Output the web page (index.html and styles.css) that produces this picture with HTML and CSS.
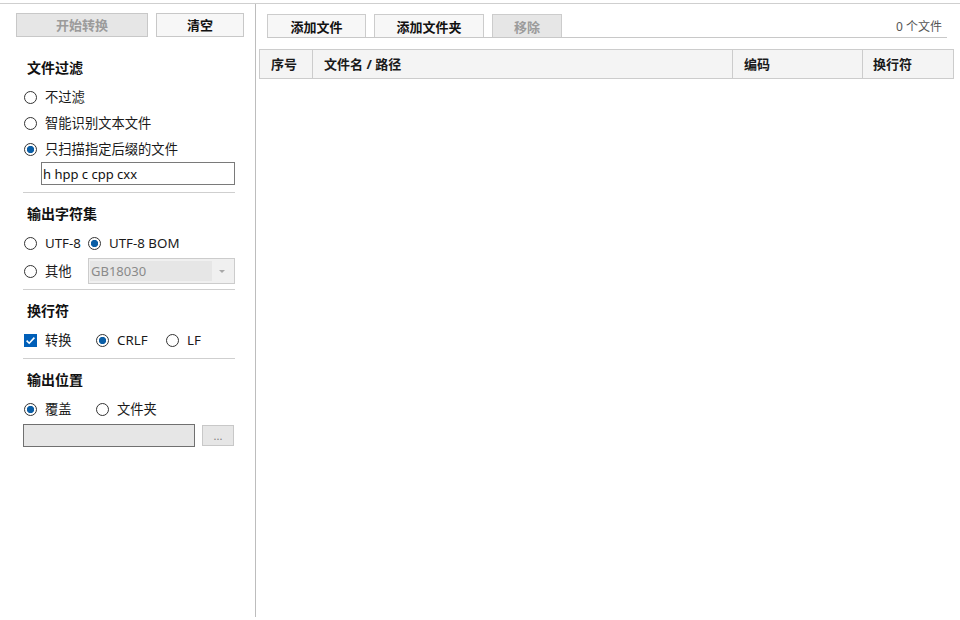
FILE: index.html
```html
<!DOCTYPE html>
<html lang="zh-CN">
<head>
  <meta charset="UTF-8">
  <meta name="viewport" content="width=device-width, initial-scale=1.0">
  <title>编码转换</title>
  <link rel="stylesheet" href="styles.css">
</head>
<body>
  <div class="app">
    <aside class="side">
      <div class="actions">
        <button class="btn btn-start" disabled>开始转换</button>
        <button class="btn btn-clear">清空</button>
      </div>

      <div class="side-body">
        <!-- 文件过滤 -->
        <h2 class="group-title first">文件过滤</h2>
        <div class="row"><label class="opt"><span class="radio"></span>不过滤</label></div>
        <div class="row"><label class="opt"><span class="radio"></span>智能识别文本文件</label></div>
        <div class="row"><label class="opt"><span class="radio checked"></span>只扫描指定后缀的文件</label></div>
        <input class="ext-input" type="text" value="h hpp c cpp cxx">

        <hr class="sep">

        <!-- 输出字符集 -->
        <h2 class="group-title">输出字符集</h2>
        <div class="row">
          <label class="opt w64"><span class="radio"></span>UTF-8</label>
          <label class="opt"><span class="radio checked"></span>UTF-8 BOM</label>
        </div>
        <div class="row row-combo">
          <label class="opt w65"><span class="radio"></span>其他</label>
          <div class="combo">
            <span class="combo-text">GB18030</span>
            <span class="combo-arrow"></span>
          </div>
        </div>

        <hr class="sep">

        <!-- 换行符 -->
        <h2 class="group-title">换行符</h2>
        <div class="row">
          <label class="opt w72">
            <svg class="check" width="13" height="13" viewBox="0 0 13 13">
              <rect width="13" height="13" fill="#005fb8"/>
              <path d="M2.6 6.6 L5.2 9.2 L10.4 3.6" fill="none" stroke="#fff" stroke-width="1.6"/>
            </svg>转换
          </label>
          <label class="opt w70"><span class="radio checked"></span>CRLF</label>
          <label class="opt"><span class="radio"></span>LF</label>
        </div>

        <hr class="sep">

        <!-- 输出位置 -->
        <h2 class="group-title">输出位置</h2>
        <div class="row">
          <label class="opt w72"><span class="radio checked"></span>覆盖</label>
          <label class="opt"><span class="radio"></span>文件夹</label>
        </div>
        <div class="path-row">
          <input class="path-input" type="text" disabled>
          <button class="btn btn-browse" disabled>...</button>
        </div>
      </div>
    </aside>

    <main class="main">
      <div class="toolbar">
        <button class="tab-btn w99">添加文件</button>
        <button class="tab-btn w110">添加文件夹</button>
        <button class="tab-btn w70 disabled" disabled>移除</button>
        <span class="count">0 个文件</span>
      </div>

      <div class="file-table">
        <div class="th">序号</div>
        <div class="th">文件名 / 路径</div>
        <div class="th">编码</div>
        <div class="th">换行符</div>
      </div>
    </main>
  </div>
</body>
</html>
```

FILE: styles.css
```css
* {
  box-sizing: border-box;
}

body {
  margin: 0;
  padding-top: 3px;
  background-color: #fff;
  color: #1a1a1a;
  font-family: "Noto Sans", "Noto Sans CJK SC", sans-serif;
  font-size: 13px;
}

.app {
  display: flex;
  height: 614px;
  border-top: 1px solid #cfcfcf;
}

/* left settings column */
.side {
  width: 256px;
  flex-shrink: 0;
  border-right: 1px solid #bdbdbd;
  padding-top: 9px;
}

.actions {
  display: flex;
  gap: 8px;
  padding-left: 16px;
}

.btn {
  height: 24px;
  padding: 0;
  border: 1px solid #c8c8c8;
  background-color: #f7f7f7;
  color: #111;
  font-family: inherit;
  font-size: 13px;
  font-weight: 700;
  line-height: 22px;
}

.btn-start {
  width: 132px;
  background-color: #e6e6e6;
  color: #9b9b9b;
}

.btn-clear {
  width: 88px;
}

.side-body {
  padding: 0 20px 0 23px;
}

.group-title {
  margin: 11px 0 6px 0;
  padding-left: 4px;
  font-size: 14px;
  font-weight: 700;
  line-height: 20px;
  color: #111;
}

.group-title.first {
  margin-top: 21px;
}

.row {
  display: flex;
  align-items: center;
  height: 26px;
}

.row-combo {
  margin-top: 2px;
}

.opt {
  display: inline-flex;
  align-items: center;
  gap: 8px;
  height: 26px;
  padding-left: 1px;
  white-space: nowrap;
  line-height: 26px;
  font-size: 13.3px;
}

.w64 { width: 64px; }
.w65 { width: 65px; }
.w70 { width: 70px; }
.w72 { width: 72px; }
.w99 { width: 99px; }
.w110 { width: 110px; }

.radio {
  width: 13px;
  height: 13px;
  flex-shrink: 0;
  border: 1px solid #333;
  border-radius: 50%;
  background-color: #fff;
}

.radio.checked {
  background: radial-gradient(circle, #0a5ea6 0, #0a5ea6 3.4px, #fff 3.9px);
}

.check {
  display: block;
  flex-shrink: 0;
}

.ext-input {
  display: block;
  width: 194px;
  height: 23px;
  margin: 0 0 0 18px;
  padding: 0 1px;
  border: 1px solid #7a7a7a;
  font-family: inherit;
  font-size: 13px;
  color: #111;
  outline: none;
}

.sep {
  height: 1px;
  margin: 7px 0 0 0;
  border: none;
  background-color: #cfcfcf;
}

.row-combo + .sep,
.row + .sep {
  margin-top: 5px;
}

.combo {
  display: flex;
  align-items: center;
  width: 147px;
  height: 26px;
  padding: 2px 2px 2px 1px;
  border: 1px solid #cccccc;
  background-color: #f0f0f0;
}

.combo-text {
  flex: 1;
  height: 100%;
  padding-left: 1px;
  background-color: #e6e6e6;
  color: #8a8a8a;
  line-height: 20px;
}

.combo-arrow {
  width: 20px;
  height: 100%;
  position: relative;
}

.combo-arrow::after {
  content: "";
  position: absolute;
  left: 7px;
  top: 9px;
  border-left: 3px solid transparent;
  border-right: 3px solid transparent;
  border-top: 3px solid #a8a8a8;
}

.path-row {
  display: flex;
  align-items: center;
  gap: 7px;
  margin-top: 2px;
}

.path-input {
  width: 172px;
  height: 23px;
  border: 1px solid #707070;
  background-color: #e6e6e6;
  outline: none;
}

.btn-browse {
  width: 32px;
  height: 21px;
  border-color: #c8c8c8;
  background-color: #e6e6e6;
  color: #7f7f7f;
  font-size: 11px;
  font-weight: 400;
  line-height: 19px;
}

/* right file list */
.main {
  flex: 1;
  padding: 10px 6px 0 3px;
}

.toolbar {
  display: flex;
  align-items: flex-end;
  gap: 8px;
  height: 24px;
  margin: 0 7px 0 8px;
  border-bottom: 1px solid #c8c8c8;
}

.tab-btn {
  height: 23px;
  padding: 0;
  border: 1px solid #cccccc;
  border-bottom: none;
  background-color: #f7f7f7;
  color: #111;
  font-family: inherit;
  font-size: 13px;
  font-weight: 700;
  line-height: 24px;
}

.tab-btn.disabled {
  background-color: #e6e6e6;
  color: #9b9b9b;
}

.count {
  margin-left: auto;
  align-self: center;
  padding-right: 5px;
  color: #555;
  font-size: 12px;
}

.file-table {
  display: grid;
  grid-template-columns: 53px 420px 130px 1fr;
  margin-top: 11px;
  border: 1px solid #cccccc;
  background-color: #f4f4f4;
}

.th {
  height: 28px;
  padding-left: 11px;
  border-right: 1px solid #cccccc;
  font-weight: 700;
  line-height: 28px;
  color: #1a1a1a;
}

.th:last-child {
  border-right: none;
  padding-left: 10px;
}
```
